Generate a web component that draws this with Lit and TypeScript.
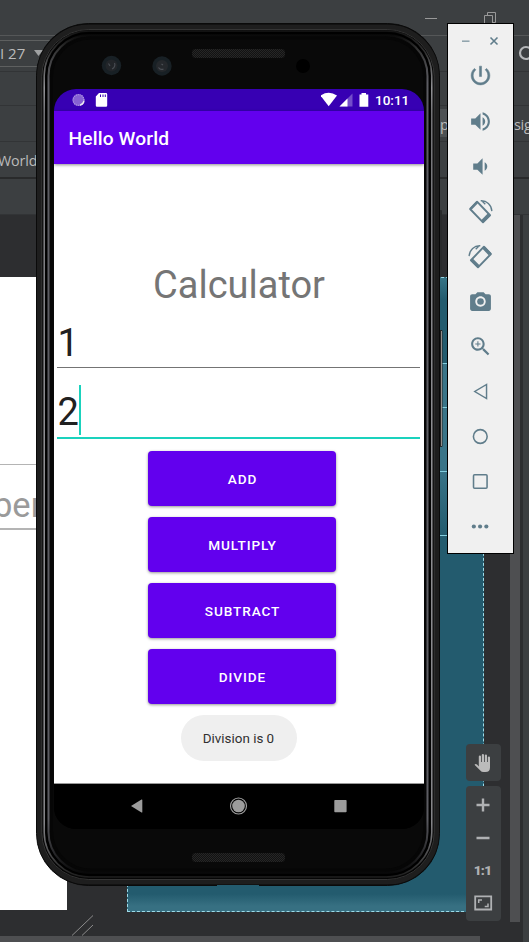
import { LitElement, html, css, svg } from "lit";
import { customElement } from "lit/decorators.js";

const glyphs = {
  power: svg`<path stroke="currentColor" stroke-width=".5" d="M13 3h-2v10h2V3zm4.83 2.17l-1.42 1.42C17.99 7.86 19 9.81 19 12c0 3.87-3.13 7-7 7s-7-3.13-7-7c0-2.19 1.01-4.14 2.58-5.42L6.17 5.17C4.23 6.82 3 9.26 3 12c0 4.97 4.03 9 9 9s9-4.03 9-9c0-2.74-1.23-5.18-3.17-6.83z"/>`,
  volUp: svg`<path d="M3 9v6h4l5 5V4L7 9H3zm13.5 3c0-1.77-1.02-3.29-2.5-4.03v8.05c1.48-.73 2.5-2.25 2.5-4.02zM14 3.23v2.06c2.89.86 5 3.54 5 6.71s-2.11 5.85-5 6.71v2.06c4.01-.91 7-4.49 7-8.77s-2.99-7.86-7-8.77z"/>`,
  volDown: svg`<path d="M18.5 12c0-1.77-1.02-3.29-2.5-4.03v8.05c1.48-.73 2.5-2.25 2.5-4.02zM5 9v6h4l5 5V4L9 9H5z"/>`,
  rotL: svg`<g fill="none" stroke="currentColor"><path stroke-width="1.8" stroke-linejoin="round" d="M2 9.6L8.7 2.6L21.2 15.6L14.4 22.4Z"/><path stroke-width="3.2" d="M20.3 14.9L13.7 21.5"/><path stroke-width="2.4" d="M2.6 9.6L8.7 3.2"/><path stroke-width="1.3" d="M12.2 1.7C18 1.4 22.5 5.5 22.9 11.6M13.2 1.6L16.6 5"/></g>`,
  rotR: svg`<g fill="none" stroke="currentColor" transform="matrix(-1 0 0 1 23 0)"><path stroke-width="1.8" stroke-linejoin="round" d="M1 9.6L7.7 2.6L20.2 15.6L13.4 22.4Z"/><path stroke-width="3" d="M19.5 15L13 21.5"/><path stroke-width="3.2" d="M2 9.8L8 3.4"/><path stroke-width="1.3" d="M11.2 1.7C17 1.4 21.5 5.5 21.9 11.6M12.2 1.6L15.6 5"/></g>`,
  camera: svg`<circle cx="12" cy="12" r="3.2"/><path d="M9 3L7.17 5H4c-1.1 0-2 .9-2 2v12c0 1.1.9 2 2 2h16c1.1 0 2-.9 2-2V7c0-1.1-.9-2-2-2h-3.17L15 3H9zm3 14c-2.76 0-5-2.24-5-5s2.24-5 5-5 5 2.24 5 5-2.24 5-5 5z"/>`,
  zoom: svg`<path d="M15.5 14h-.79l-.28-.27C15.41 12.59 16 11.11 16 9.5 16 5.91 13.09 3 9.5 3S3 5.91 3 9.5 5.91 16 9.5 16c1.61 0 3.09-.59 4.23-1.57l.27.28v.79l5 4.99L20.49 19l-4.99-5zm-6 0C7.01 14 5 11.99 5 9.5S7.01 5 9.5 5 14 7.01 14 9.5 11.99 14 9.5 14zm2.5-4h-2v2H9v-2H7V9h2V7h1v2h2v1z"/>`,
  back: svg`<path fill="none" stroke="currentColor" stroke-width="1.4" d="M17.8 5.2V18.8L6.5 12Z"/>`,
  home: svg`<circle cx="11.8" cy="12" r="6.6" fill="none" stroke="currentColor" stroke-width="1.5"/>`,
  recent: svg`<rect x="5.3" y="5.5" width="13" height="13" rx="1" fill="none" stroke="currentColor" stroke-width="1.5"/>`,
  more: svg`<circle cx="5.6" cy="12" r="2"/><circle cx="11.6" cy="12" r="2"/><circle cx="17.6" cy="12" r="2"/>`,
};

@customElement("emulator-tools")
export class EmulatorTools extends LitElement {
  static styles = css`
    :host { display: flex; flex-direction: column; box-sizing: border-box; background: #f0f0f0; border: 1px solid #000; color: #607d8b; }
    .head { height: 29.5px; display: flex; padding: 6px 0 0 12px; box-sizing: border-box; }
    .head svg { width: 42px; height: 22px; }
    .item { height: 45px; display: flex; align-items: center; justify-content: center; padding-right: 1px; }
    .item svg { width: 25px; height: 25px; fill: currentColor; }
    .item:nth-child(2) svg { margin-bottom: 2px; }
  `;
  render() {
    return html`
      <div class="head"><svg viewBox="0 0 42 22" fill="none" stroke="currentColor" stroke-width="1.6"><path opacity=".65" d="M2 11.2H9.5"/><path d="M30.5 7.5L37.5 14.5M37.5 7.5L30.5 14.5"/></svg></div>
      ${Object.values(glyphs).map((g) => html`<div class="item"><svg viewBox="0 0 24 24">${g}</svg></div>`)}
    `;
  }
}

@customElement("phone-screen")
export class PhoneScreen extends LitElement {
  static styles = css`
    :host { display: flex; flex-direction: column; overflow: hidden; background: #000; font-family: Roboto, sans-serif; border-radius: 22px; }
    .status { height: 22px; flex: none; background: #3700b3; display: flex; align-items: center; color: #fff; }
    .status svg { flex: none; }
    .left { margin-left: 16.5px; width: 38px; height: 22px; }
    .right { margin-left: auto; width: 54px; height: 22px; }
    .time { font-size: 13.5px; font-weight: 500; width: 34px; margin: 0 15px 0 0; white-space: nowrap; }
    .bar { height: 53px; flex: none; background: #6200ee; color: #fff; display: flex; align-items: center; padding-left: 14.5px; font-size: 19.2px; letter-spacing: .13px; font-weight: 500; box-shadow: 0 1px 3px rgba(0,0,0,.45); z-index: 1; padding-top: 2px; box-sizing: border-box; }
    .body { flex: 1; background: #fff; display: flex; flex-direction: column; align-items: center; }
    .title { margin: 96px 0 1px; font-size: 38px; line-height: 50px; color: #757575; }
    .field { box-sizing: border-box; width: 363px; margin-right: 1px; font-size: 38px; line-height: 50px; color: #212121; display: flex; padding-left: .5px; }
    .first { height: 57px; padding-top: 7px; border-bottom: 1px solid #747474; }
    .second { height: 71px; padding-top: 18px; border-bottom: 2px solid #1ad2bd; line-height: 52px; }
    .caret { width: 2px; height: 50px; margin-top: -1px; background: #1ad2bd; }
    .btns { display: flex; flex-direction: column; gap: 11px; margin: 12px 0 0 6px; }
    .btn { width: 188px; height: 55px; border-radius: 4px; background: #6200ee; color: #fff; display: flex; align-items: center; justify-content: center; padding: 1px 0 0 1px; box-sizing: border-box; font-size: 13.6px; font-weight: 500; letter-spacing: .9px; box-shadow: 0 1px 3px rgba(0,0,0,.42); }
    .toast { margin: 11px 1px 0 0; width: 116px; height: 46px; border-radius: 23px; background: #efefef; color: #303030; font-size: 13.4px; display: flex; align-items: center; justify-content: center; }
    .nav { height: 45px; flex: none; background: #000; border-top: 1px solid #999; }
    .nav svg { width: 370px; height: 45px; display: block; }
  `;
  render() {
    return html`
      <div class="status">
        <svg class="left" viewBox="0 0 38 22"><circle cx="7.5" cy="11" r="6" fill="#8661d3"/><circle cx="7.5" cy="11" r="5.4" fill="none" stroke="#b09ae2" stroke-width="1.2" stroke-dasharray="1 1"/><path d="M13 12A5.6 5.6 0 0 1 9 16.2" fill="none" stroke="#eee" stroke-width="1.3"/><path fill="#fff" d="M28 4h7a1.2 1.2 0 0 1 1.2 1.2v11.4A1.2 1.2 0 0 1 35 17.8H26A1.2 1.2 0 0 1 24.8 16.6V7.5Z"/><path stroke="#3700b3" d="M29.5 5.5V8M32 5.5V8M34.3 5.5V8"/></svg>
        <svg class="right" viewBox="0 0 54 22"><path fill="#fff" d="M-.5 6.5Q7.7 1.2 16 6.5L7.7 17.3Z"/><path fill="#fff" opacity=".3" d="M18.5 17.5L31.5 4.5V17.5Z"/><path fill="#fff" d="M18.5 17.5L26.5 9.5V17.5Z"/><path fill="#fff" d="M40.500 4H45V5.5H47.3V17.7H38.5V5.5H40.500Z"/></svg>
        <span class="time">10:11</span>
      </div>
      <div class="bar">Hello World</div>
      <div class="body">
        <div class="title">Calculator</div>
        <div class="field first">1</div>
        <div class="field second">2<span class="caret"></span></div>
        <div class="btns">${["ADD", "MULTIPLY", "SUBTRACT", "DIVIDE"].map((t) => html`<div class="btn">${t}</div>`)}</div>
        <div class="toast">Division is 0</div>
      </div>
      <div class="nav"><svg viewBox="0 0 370 45" fill="#9c9c9c"><path d="M77 22L87.5 15.5Q88.3 15.2 88.3 16V28Q88.3 28.8 87.5 28.5Z"/><circle cx="184.5" cy="22" r="6.3"/><circle cx="184.5" cy="22" r="8" fill="none" stroke="#9c9c9c" stroke-width="1.2"/><rect x="280.3" y="16" width="12.3" height="12.3" rx=".8"/></svg></div>
    `;
  }
}

@customElement("app-root")
export class AppRoot extends LitElement {
  static styles = css`
    :host { display: block; position: relative; width: 529px; height: 942px; overflow: hidden; background: #2d2e30; font-family: "Open Sans", "Noto Sans", sans-serif; color: #bbb; }
    .ide { display: flex; flex-direction: column; height: 942px; }
    .row { flex: none; box-sizing: border-box; background: #3c3f41; border-bottom: 1px solid #323436; display: flex; align-items: center; white-space: nowrap; font-size: 15px; }
    .r1 { height: 36px; border-color: #555758; justify-content: flex-end; }
    .r1 svg { width: 76px; height: 18px; margin: 1px 31px 0 0; }
    .r2 { height: 36px; justify-content: space-between; }
    .combo { width: 60px; height: 27px; margin-top: -1px; border: 1px solid #5e6060; border-left: 0; display: flex; align-items: center; box-sizing: border-box; }
    .combo svg { width: 9px; height: 6px; margin-left: 9px; }
    .lens { width: 11px; height: 16px; margin-bottom: 1px; }
    .r3 { height: 34px; }
    .r4 { height: 36px; padding-left: 440px; font-size: 14.5px; }
    .tab { width: 74px; height: 28px; line-height: 31px; background: #4e5254; margin-bottom: 2px; }
    .tab2 { width: 15px; letter-spacing: -.3px; padding-top: 2px; box-sizing: border-box; }
    .r5 { height: 37px; border-bottom: 2px solid #292a2b; font-size: 14.3px; letter-spacing: -.1px; text-indent: -2px; padding-top: 2px; }
    .r6 { height: 36px; }
    .work { flex: 1; display: grid; grid-template-columns: 67px 60px 357px 26px 10px 3px 1fr; grid-template-rows: 62px 635px 10px 14px 6px; }
    .paper { grid-area: 2 / 1; margin-bottom: 2px; background: #fff; padding-top: 187px; box-sizing: border-box; }
    .hint { border: solid #b4b4b4; border-width: 1px 0 2px; height: 66px; box-sizing: border-box; font: 34.5px/81px Roboto, sans-serif; color: #9a9a9a; text-indent: -7px; }
    .blue { grid-area: 2 / 3; border: 1px dashed #9edbe8; background: linear-gradient(#377486, #235b6e 22px, #235b6e 85px, #397488 86px, #397488 190px, #235b6e 258px, #235b6e 616px, #377082 628px); padding-top: 85px; display: flex; flex-direction: column; gap: 43px; }
    .blue i { height: 1px; background: #83cddd; }
    .blue i:nth-child(n + 3) { margin-top: 20px; }
    .vbar { grid-area: 1 / 5 / 4 / 6; background: #4e4f51; }
    .edge { grid-area: 1 / 7 / 6 / 8; background: #3c3f41; }
    .grip { grid-area: 3 / 2 / 5 / 3; margin: 3px 0 0 4px; width: 24px; height: 21px; }
    .hbar { grid-area: 5 / 1 / 6 / 4; background: #4e4f51; margin-right: 4px; }
    .phone { position: absolute; left: 36px; top: 22px; width: 408px; height: 866px; }
    phone-screen { position: absolute; left: 54px; top: 89px; width: 370px; height: 740px; }
    emulator-tools { position: absolute; left: 447px; top: 23px; width: 67px; height: 531px; }
    .panels { position: absolute; left: 466px; top: 744px; width: 35px; display: flex; flex-direction: column; gap: 5px; }
    .panel { background: #3c3f41; border-radius: 4px; color: #afb1b3; display: flex; flex-direction: column; align-items: center; }
    .p1 { height: 37px; }
    .p2 { height: 135px; }
    .panel svg { width: 35px; flex: none; fill: none; stroke: currentColor; }
    .p1 svg { height: 37px; fill: #bbb; stroke: none; }
    .pm { height: 70px; }
    .one { height: 27px; font: 900 13.5px/28px Roboto, sans-serif; letter-spacing: -.7px; margin-right: 2px; }
    .fit { height: 38px; }
  `;
  render() {
    return html`
      <div class="ide">
        <div class="row r1"><svg viewBox="0 0 76 18" fill="none" stroke="#999"><path d="M3 9.5H15"/><path d="M62.5 6.5H70.5V16.5H62.5ZM65.5 6V3.5H73.5V13.5H71"/></svg></div>
        <div class="row r2"><div class="combo">I 27<svg viewBox="0 0 9 6"><path fill="#a0a2a3" d="M0 0H9L4.5 6Z"/></svg></div><svg class="lens" viewBox="0 0 11 16" fill="none" stroke="#b4b6b8" stroke-width="2.2"><circle cx="8" cy="8" r="6"/></svg></div>
        <div class="row r3"></div>
        <div class="row r4"><span class="tab">p</span><span class="tab2">sig</span></div>
        <div class="row r5">World</div>
        <div class="row r6"></div>
        <div class="work">
          <div class="paper"><div class="hint">ber</div></div>
          <div class="blue"><i></i><i></i><i></i><i></i></div>
          <div class="vbar"></div><div class="edge"></div>
          <svg class="grip" viewBox="0 0 24 21" stroke="#8b8b8b" fill="none"><path d="M1 20.5L22 .5M11 20.5L22 10"/></svg>
          <div class="hbar"></div>
        </div>
      </div>
      <div class="panels">
        <div class="panel p1"><svg viewBox="0 0 35 37"><path d="M12.8 22.5V12.6a1 1 0 0 1 2.2 0V18h.8V11a1 1 0 0 1 2.2 0V18h.8V11.6a1 1 0 0 1 2.2 0V18h.8V13.6a1 1 0 0 1 2.2 0V23.5Q24 28 19.5 28H17.5Q15.5 28 14.3 26.5L8.5 20.8Q9.5 19.5 11 20.5Z"/></svg></div>
        <div class="panel p2"><svg class="pm" viewBox="0 0 35 70" stroke-width="2.4"><path d="M10.5 19H23.5M17 12.5V25.5M10.5 52H23.5"/></svg><div class="one">1:1</div><svg class="fit" viewBox="0 0 35 38"><path stroke-width="1.8" d="M9.2 13.4H25.2V26.5H9.2Z"/><path stroke-width="1.5" d="M12.7 20V17H16M22 20.5V23.5H18.7"/></svg></div>
      </div>
      <svg class="phone" viewBox="36 22 408 866" fill="none">
        <defs>
          <linearGradient id="side" gradientUnits="userSpaceOnUse" x1="0" y1="28" x2="0" y2="883"><stop stop-color="#111"/><stop offset=".03" stop-color="#333"/><stop offset=".07" stop-color="#99999d"/><stop offset=".1" stop-color="#77777b"/><stop offset=".5" stop-color="#96969a"/><stop offset=".93" stop-color="#8a8a8e"/><stop offset=".98" stop-color="#333"/><stop offset="1" stop-color="#111"/></linearGradient>
          <linearGradient id="inner" gradientUnits="userSpaceOnUse" x1="0" y1="32" x2="0" y2="878"><stop stop-color="#000"/><stop offset=".02" stop-color="#333"/><stop offset=".06" stop-color="#5c5c62"/><stop offset=".93" stop-color="#5c5c62"/><stop offset="1" stop-color="#000"/></linearGradient>
          <pattern id="mesh" width="2" height="2" patternUnits="userSpaceOnUse"><path fill="#121212" d="M0 0H2V2H0Z"/><path fill="#262626" d="M0 0H1V1H0ZM1 1H2V2H1Z"/></pattern>
        </defs>
        <rect x="438" y="210" width="4" height="60" rx="1" fill="#292b2c"/>
        <rect x="438" y="330" width="4.5" height="117" rx="1" fill="#242424"/><path d="M441.500 331V446" stroke="#918c89"/>
        <rect x="36.5" y="23.5" width="403" height="862" rx="52" fill="#060606" stroke="#0a0a0a"/>
        <rect x="39.5" y="27" width="397" height="855" rx="49" stroke="#1e1e1e" stroke-width="5"/>
        <rect x="41.8" y="29.5" width="392.4" height="850" rx="47" stroke="#343434"/>
        <rect x="44.2" y="31" width="387.6" height="846" rx="45" stroke="url(#side)" stroke-width="1.5"/>
        <rect x="46.5" y="33" width="383" height="842" rx="43" stroke="#000" stroke-width="2"/>
        <rect x="48.5" y="35" width="379" height="838" rx="41" fill="#090909" stroke="url(#inner)" stroke-width="2"/>
        <rect x="51.5" y="38" width="373" height="832" rx="39" stroke="#060606" stroke-width="3"/>
        <path d="M217 885.5H259" stroke="#235b6e"/>
        <rect x="192" y="49" width="93" height="9" rx="4" fill="url(#mesh)"/>
        <rect x="192" y="853" width="93" height="9" rx="4" fill="url(#mesh)"/>
        <circle cx="111.5" cy="65.5" r="9.7" fill="#182025"/><circle cx="111.5" cy="65.5" r="6" fill="#222529"/><path d="M108.5 63.5l1.5 2.5M114.5 63a4.5 4.5 0 0 1-2.5 6" stroke="#484c52" stroke-width="1.2"/><circle cx="162" cy="66" r="9.7" fill="#182025"/><circle cx="162" cy="66" r="6" fill="#25282c"/><path d="M158.5 67.5a4 4 0 0 0 5 1.5M161.5 64l1.5 1" stroke="#4c5056" stroke-width="1.2"/>
        <circle cx="303" cy="66" r="7" fill="#000"/>
      </svg>
      <phone-screen></phone-screen>
      <emulator-tools></emulator-tools>
    `;
  }
}
